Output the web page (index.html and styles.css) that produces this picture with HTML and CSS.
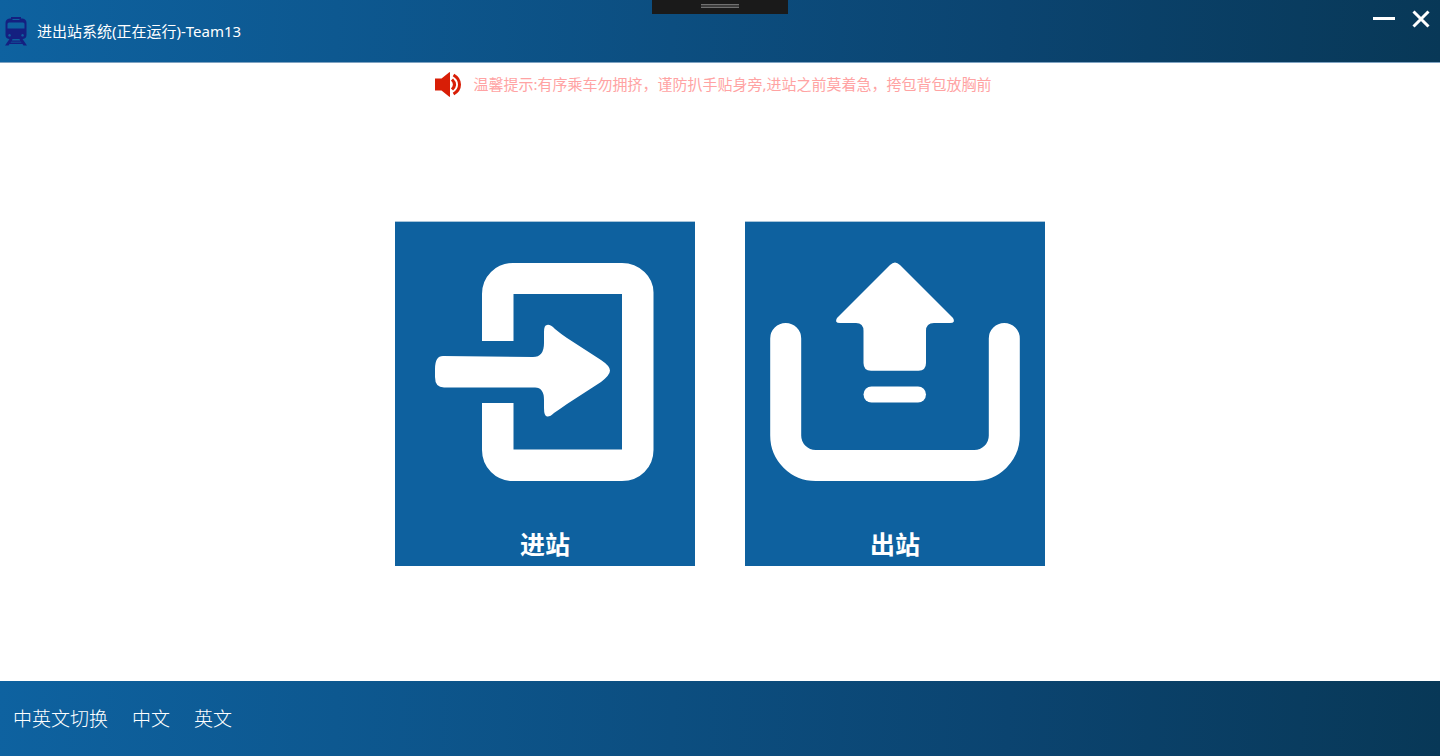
FILE: index.html
```html
<!DOCTYPE html>
<html lang="zh-CN">
<head>
<meta charset="utf-8">
<title>进出站系统</title>
<link rel="stylesheet" href="styles.css">
</head>
<body>
<div class="app">
  <header class="titlebar">
    <svg class="train" viewBox="0 0 22 29" aria-hidden="true">
      <path fill-rule="evenodd" d="M6 0h10v1.500h1.500Q21.500 2 21.500 6V18Q21.500 21.500 18 22H4Q.5 21.500 .5 18V6Q.5 2 4.500 1.500H6zM7.500 2v1h7V2zM4 5.500Q2.500 5.500 2.500 7v4.500h17V7Q19.500 5.500 18 5.500zM4.500 17a1.300 1.300 0 1 0 .1 0zM17.500 17a1.300 1.300 0 1 0 .1 0z"/>
      <path d="M4.500 22h3l-.6 1.500h8.200L14.500 22h3l4.500 6.500h-3.500L17.500 27h-13L3.500 28.500H0zM6 24.800l-.5.700h11l-.5-.7z" fill-rule="evenodd"/>
    </svg>
    <h1 class="title">进出站系统(正在运行)-Team13</h1>
    <div class="window-controls">
      <button class="control" type="button" aria-label="最小化">
        <svg viewBox="0 0 22 18"><path d="M0 8.500H22"/></svg>
      </button>
      <button class="control" type="button" aria-label="关闭">
        <svg viewBox="0 0 18 18"><path d="M1.500 1.500L16.500 16.500M16.500 1.500L1.500 16.500"/></svg>
      </button>
    </div>
    <div class="handle"><span class="grip"></span></div>
  </header>

  <main class="content">
    <p class="notice">
      <svg class="speaker" viewBox="0 0 26 25" aria-hidden="true">
        <path class="cone" d="M0 6.500H6.500L14 .5L15 0V25L14 24.500L6.500 18.500H0z"/>
        <path class="wave" d="M17 7.500Q22 12.500 17 17.500M18.500 3Q24.500 6.500 24.500 12.500T18.500 22"/>
      </svg>
      <span>温馨提示:有序乘车勿拥挤，谨防扒手贴身旁,进站之前莫着急，挎包背包放胸前</span>
    </p>
    <div class="tiles">
      <button class="tile" type="button">
        <svg class="tile-icon" viewBox="0 0 300 300" aria-hidden="true">
          <path d="M87 119V72Q87 59 96 50T118 41H227Q240 41 249.500 50T258.500 72V228Q258.500 241 249.500 250T227 259H118Q105 259 96 250T87 228V181H118.500V227.500H227V72H118.500V119z"/>
          <path d="M48 134L138 135Q149 135 149 121V110Q149 103 152 103Q155 102 160 107Q166 112 172 116L206 138Q215 144 215 148.500Q215 153 206 160L172 182Q165 187 159 191Q155 195 152 194.500Q149 194 149 186V178Q149 165.500 140 165.500H49Q40 165.500 40 155V147Q40 134 48 134z"/>
        </svg>
        <span class="tile-label">进站</span>
      </button>
      <button class="tile" type="button">
        <svg class="tile-icon" viewBox="0 0 300 300" aria-hidden="true">
          <path class="tray" d="M40.700 116.500V213.500A30 30 0 0 0 70.700 243.500H229.300A30 30 0 0 0 259.300 213.500V116.500"/>
          <path d="M145 43Q150 38 155 43L208 96Q211 101 205 101H189Q181 101 181 109V141Q181 148.700 173.500 148.700H126Q118.500 148.700 118.500 141V109Q118.500 101 111 101H95Q89 101 92 96z"/>
          <rect x="118.500" y="164.500" width="62.500" height="16" rx="8"/>
        </svg>
        <span class="tile-label">出站</span>
      </button>
    </div>
  </main>

  <footer class="footer">
    <span>中英文切换</span>
    <button class="lang" type="button">中文</button>
    <button class="lang" type="button">英文</button>
  </footer>
</div>
</body>
</html>
```
FILE: styles.css
```css
* {
  box-sizing: border-box;
}

body {
  margin: 0;
  background: #fff;
  font-family: "Microsoft YaHei", "Noto Sans", "Noto Sans CJK SC", sans-serif;
}

button {
  margin: 0;
  padding: 0;
  border: 0;
  background: none;
  color: inherit;
  font: inherit;
  cursor: pointer;
}

svg {
  display: block;
}

.app {
  display: flex;
  flex-direction: column;
  min-height: 100vh;
}

.titlebar,
.footer {
  display: flex;
  align-items: center;
  background: linear-gradient(92deg, #0e62a0 0%, #0b4470 70%, #083857 100%);
  color: #fff;
}

.titlebar {
  position: relative;
  height: 63px;
  padding: 0 10px 0 5px;
  border-bottom: 1px solid #7fa3c2;
}

.train {
  width: 22px;
  height: 29px;
  fill: #142080;
}

.title {
  margin: 0 auto 0 10px;
  font-size: 15px;
  font-weight: 400;
  line-height: 20px;
}

.window-controls {
  display: flex;
  align-self: flex-start;
  gap: 17px;
  padding-top: 10px;
}

.control svg {
  height: 18px;
  fill: none;
  stroke: #fff;
  stroke-width: 3;
}

.handle {
  position: absolute;
  top: 0;
  left: 50%;
  display: flex;
  justify-content: center;
  width: 136px;
  height: 14px;
  padding-top: 4px;
  background: #1a1a1a;
  transform: translateX(-50%);
}

.grip {
  width: 38px;
  height: 4px;
  border: solid #707070;
  border-width: 1px 0;
  background: #3c3c3c;
}

.content {
  display: flex;
  flex: 1;
  flex-direction: column;
}

.notice {
  display: flex;
  align-items: center;
  justify-content: center;
  gap: 12px;
  height: 42px;
  margin: 0;
  padding-right: 13px;
  color: #ffa3a3;
  font-size: 15px;
  line-height: 20px;
}

.speaker {
  width: 26px;
  height: 25px;
}

.cone {
  fill: #d81e06;
}

.wave {
  fill: none;
  stroke: #d81e06;
  stroke-width: 3;
}

.tiles {
  display: flex;
  flex: 1;
  flex-wrap: wrap;
  align-items: center;
  justify-content: center;
  gap: 50px;
}

.tile {
  width: 300px;
  border-top: 1px solid #a8c5da;
  background: #0e619f;
  color: #fff;
}

.tile-icon {
  width: 100%;
  fill: #fff;
}

.tray {
  fill: none;
  stroke: #fff;
  stroke-width: 31;
  stroke-linecap: round;
}

.tile-label {
  display: block;
  font-size: 25px;
  font-weight: 700;
  line-height: 44px;
}

.footer {
  gap: 24px;
  height: 75px;
  padding: 0 13px 3px;
  font-family: KaiTi, "Noto Sans CJK SC", sans-serif;
  font-size: 19px;
  font-weight: 300;
}
```
